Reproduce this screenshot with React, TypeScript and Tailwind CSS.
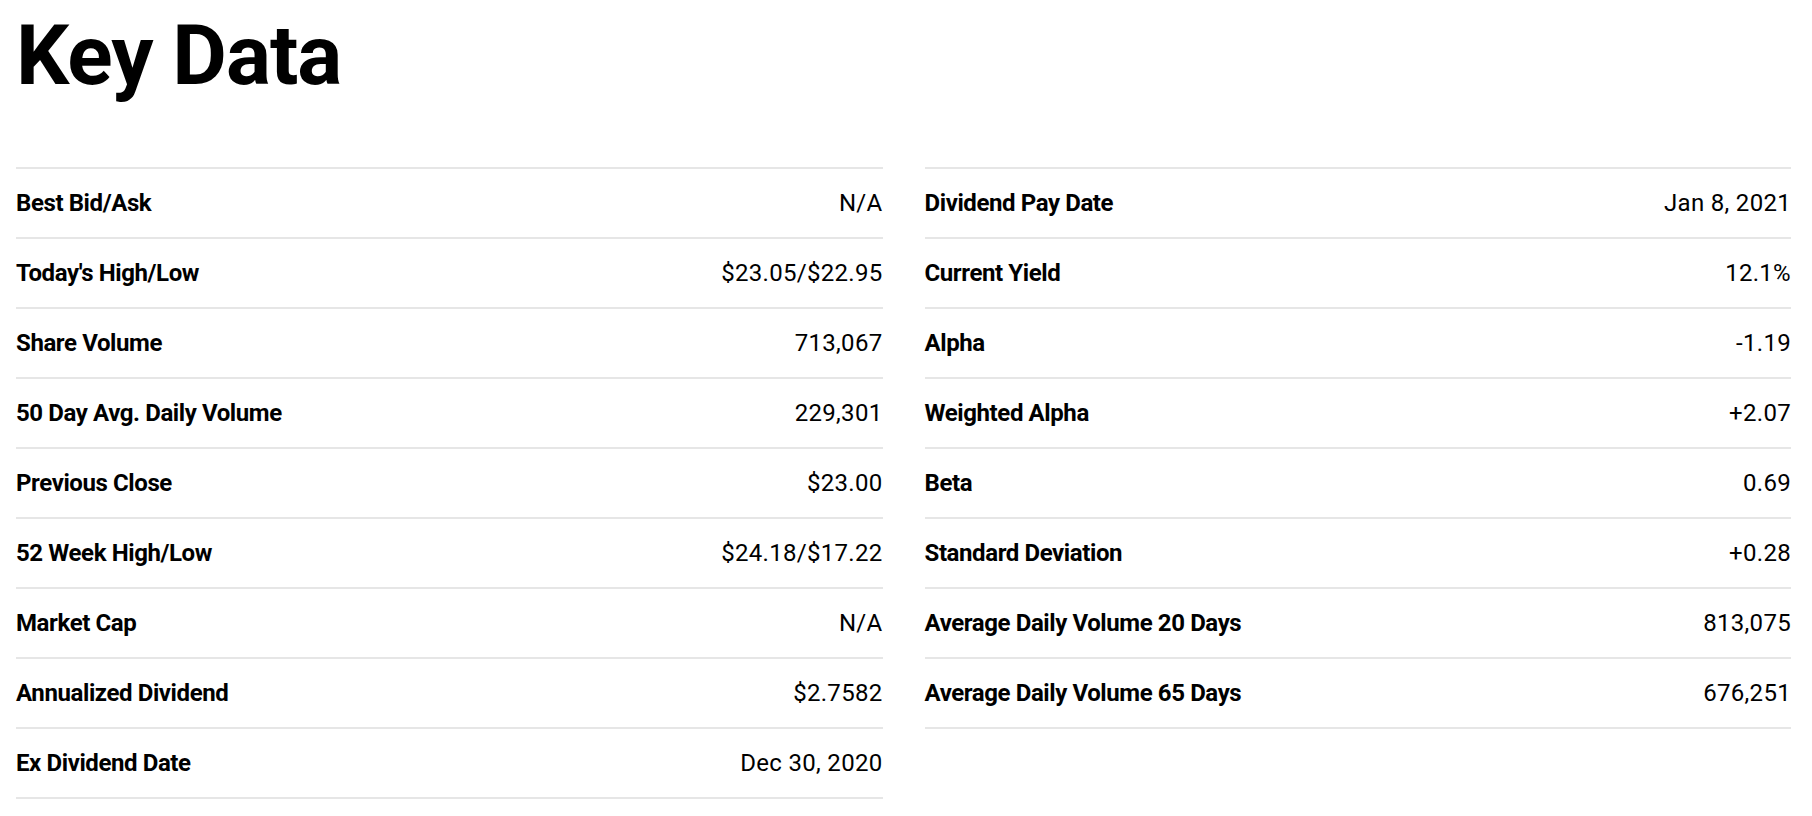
import React from "react";

const left: [string, string][] = [
  ["Best Bid/Ask", "N/A"],
  ["Today's High/Low", "$23.05/$22.95"],
  ["Share Volume", "713,067"],
  ["50 Day Avg. Daily Volume", "229,301"],
  ["Previous Close", "$23.00"],
  ["52 Week High/Low", "$24.18/$17.22"],
  ["Market Cap", "N/A"],
  ["Annualized Dividend", "$2.7582"],
  ["Ex Dividend Date", "Dec 30, 2020"],
];

const right: [string, string][] = [
  ["Dividend Pay Date", "Jan 8, 2021"],
  ["Current Yield", "12.1%"],
  ["Alpha", "-1.19"],
  ["Weighted Alpha", "+2.07"],
  ["Beta", "0.69"],
  ["Standard Deviation", "+0.28"],
  ["Average Daily Volume 20 Days", "813,075"],
  ["Average Daily Volume 65 Days", "676,251"],
];

function Table({ rows }: { rows: [string, string][] }) {
  return (
    <div className="flex-1 border-b-2 border-[#e6e6e6]">
      {rows.map(([k, v]) => (
        <div key={k} className="flex justify-between items-start border-t-2 border-[#e6e6e6] py-[20px] text-[24px] leading-[28px] text-black">
          <span className="font-bold max-w-[330px] tracking-[-0.4px]">{k}</span>
          <span className="tracking-[0.3px]">{v}</span>
        </div>
      ))}
    </div>
  );
}

export default function App() {
  return (
    <div className="bg-white min-h-screen px-4 pr-[21px] font-[Roboto,sans-serif]">
      <h1 className="text-[84px] font-bold leading-none pt-[14px] tracking-[-1px] text-black">Key Data</h1>
      <div className="flex gap-[42px] items-start mt-[69px]">
        <Table rows={left} />
        <Table rows={right} />
      </div>
    </div>
  );
}
